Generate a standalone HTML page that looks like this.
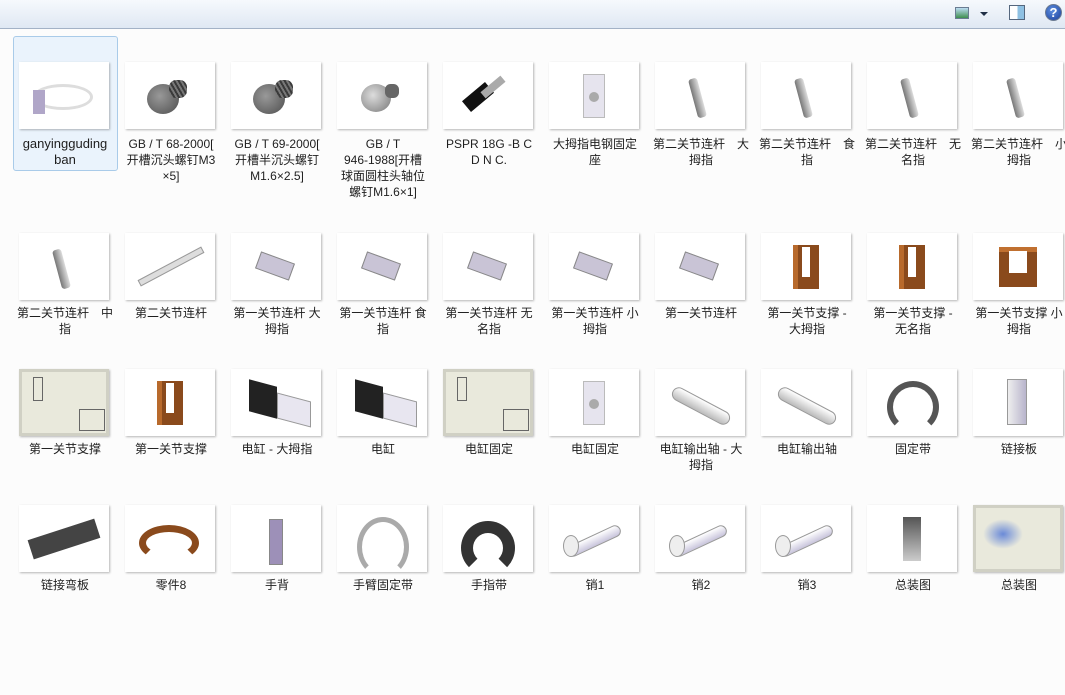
<!DOCTYPE html>
<html><head><meta charset="utf-8"><style>
*{margin:0;padding:0;box-sizing:border-box}
body{width:1065px;height:695px;overflow:hidden;background:#fcfcfc;font-family:"Liberation Sans","Noto Sans CJK SC",sans-serif;font-size:12px;color:#1e1e1e;position:relative}
.tb{position:absolute;left:0;top:0;width:1065px;height:29px;background:linear-gradient(#f6f9fd,#dfe8f3);border-bottom:1px solid #a3b2c6}
.it{position:absolute;width:104px;text-align:center}
.th{position:absolute;left:6px;width:90px;height:67px;background:#fff;box-shadow:1px 1px 2px rgba(0,0,0,.28);overflow:hidden}
.lb{position:absolute;left:-10px;width:124px;line-height:16px;text-align:center;white-space:nowrap}
.sel{position:absolute;left:13px;top:36px;width:105px;height:135px;border:1px solid #a9cbe9;border-radius:3px;background:#eaf3fc}
.s{position:absolute}
</style></head><body>
<div class="tb">
<div class="s" style="left:955px;top:7px;width:14px;height:12px;border:1px solid #6a7c92;background:linear-gradient(#bcdcf2,#3f8f4f)"></div>
<div class="s" style="left:980px;top:12px;width:0;height:0;border-left:4px solid transparent;border-right:4px solid transparent;border-top:4px solid #1f2f45"></div>
<div class="s" style="left:1009px;top:5px;width:16px;height:15px;border:1px solid #55677e;background:linear-gradient(90deg,#fff 55%,#8fc1e3 55%)"></div>
<div class="s" style="left:1045px;top:4px;width:17px;height:17px;border-radius:50%;background:radial-gradient(circle at 40% 35%,#5d8fe0,#1b3e9a);border:1px solid #6a7a92;color:#fff;font-weight:bold;font-size:13px;line-height:15px;text-align:center">?</div>
</div>
<div class="sel"></div>
<div id="g"></div>
<script>
var X=[13,119,225,331,437,543,649,755,861,967],Y=[62,233,369,505];
var items=[
["<span style='font-size:13px'>ganyingguding<br>ban</span>","bk"],["GB / T 68-2000[<br>开槽沉头螺钉M3<br>×5]","sc"],["GB / T 69-2000[<br>开槽半沉头螺钉<br>M1.6×2.5]","sc"],["GB / T<br>946-1988[开槽<br>球面圆柱头轴位<br>螺钉M1.6×1]","sg"],["PSPR 18G -B C<br>D N C.","ps"],["大拇指电钢固定<br>座","bs"],["第二关节连杆　大<br>拇指","ln"],["第二关节连杆　食<br>指","ln"],["第二关节连杆　无<br>名指","ln"],["第二关节连杆　小<br>拇指","ln"],
["第二关节连杆　中<br>指","ln"],["第二关节连杆","rod"],["第一关节连杆 大<br>拇指","lk"],["第一关节连杆 食<br>指","lk"],["第一关节连杆 无<br>名指","lk"],["第一关节连杆 小<br>拇指","lk"],["第一关节连杆","lk"],["第一关节支撑 -<br>大拇指","br"],["第一关节支撑 -<br>无名指","br"],["第一关节支撑 小<br>拇指","bb"],
["第一关节支撑","dw"],["第一关节支撑","br"],["电缸 - 大拇指","cy"],["电缸","cy"],["电缸固定","dw"],["电缸固定","bs"],["电缸输出轴 - 大<br>拇指","sh"],["电缸输出轴","sh"],["固定带","arc"],["链接板","pl"],
["链接弯板","bp"],["零件8","br2"],["手背","hb"],["手臂固定带","arc2"],["手指带","arc3"],["销1","pin"],["销2","pin"],["销3","pin"],["总装图","asm"],["总装图","dw2"]];
function art(t){
switch(t){
case"bk":return'<div class="s" style="left:14px;top:22px;width:60px;height:26px;border:3px solid #ddd;border-radius:50%;"></div><div class="s" style="left:14px;top:28px;width:12px;height:24px;background:#b0a6c8"></div>';
case"sc":return'<div class="s" style="left:22px;top:22px;width:32px;height:30px;border-radius:50%;background:radial-gradient(circle at 40% 40%,#999,#4d4d4d)"></div><div class="s" style="left:44px;top:18px;width:18px;height:18px;border-radius:40%;background:repeating-linear-gradient(60deg,#3a3a3a 0 2px,#777 2px 4px)"></div>';
case"sg":return'<div class="s" style="left:24px;top:22px;width:30px;height:28px;border-radius:50%;background:radial-gradient(circle at 40% 40%,#ddd,#777)"></div><div class="s" style="left:48px;top:22px;width:14px;height:14px;border-radius:40%;background:#666"></div>';
case"ps":return'<div class="s" style="left:28px;top:20px;width:14px;height:30px;background:#111;transform:rotate(50deg)"></div><div class="s" style="left:46px;top:12px;width:8px;height:26px;background:#aaa;transform:rotate(50deg)"></div>';
case"bs":return'<div class="s" style="left:34px;top:12px;width:22px;height:44px;background:#e6e4ee;border:1px solid #bbb"></div><div class="s" style="left:40px;top:30px;width:10px;height:10px;border-radius:50%;background:#aaa"></div>';
case"ln":return'<div class="s" style="left:38px;top:16px;width:9px;height:40px;background:linear-gradient(90deg,#777,#ddd);transform:rotate(-15deg);border-radius:3px"></div>';
case"rod":return'<div class="s" style="left:10px;top:30px;width:72px;height:7px;background:#ddd;border:1px solid #999;transform:rotate(-28deg)"></div>';
case"lk":return'<div class="s" style="left:26px;top:24px;width:36px;height:18px;background:#c9c4d6;border:1px solid #888;transform:rotate(20deg)"></div>';
case"br":return'<div class="s" style="left:32px;top:12px;width:26px;height:44px;background:#8a4a1c;border-left:5px solid #b86a2c"></div><div class="s" style="left:41px;top:14px;width:8px;height:30px;background:#fff"></div>';
case"bb":return'<div class="s" style="left:26px;top:14px;width:38px;height:40px;background:#8a4a1c;border-top:5px solid #c07030"></div><div class="s" style="left:36px;top:18px;width:18px;height:22px;background:#fff"></div>';
case"dw":return'<div class="s" style="left:0;top:0;width:90px;height:67px;background:#e9e9dc;border:3px solid #d0d0c4"></div><div class="s" style="left:60px;top:40px;width:26px;height:22px;border:1px solid #666"></div><div class="s" style="left:14px;top:8px;width:10px;height:24px;border:1px solid #666"></div>';
case"cy":return'<div class="s" style="left:18px;top:14px;width:28px;height:32px;background:#222;transform:skewY(15deg)"></div><div class="s" style="left:46px;top:28px;width:34px;height:26px;background:#e8e6f0;border:1px solid #999;transform:skewY(15deg)"></div>';
case"sh":return'<div class="s" style="left:14px;top:30px;width:64px;height:14px;border-radius:7px;background:linear-gradient(#fff,#bbb);border:1px solid #999;transform:rotate(28deg)"></div>';
case"arc":return'<div class="s" style="left:20px;top:12px;width:52px;height:52px;border:6px solid #555;border-bottom-color:transparent;border-radius:50%"></div>';
case"arc2":return'<div class="s" style="left:20px;top:12px;width:52px;height:60px;border:5px solid #aaa;border-bottom-color:transparent;border-radius:50%"></div>';
case"arc3":return'<div class="s" style="left:18px;top:16px;width:54px;height:54px;border:12px solid #333;border-bottom-color:transparent;border-radius:50%"></div>';
case"pl":return'<div class="s" style="left:34px;top:10px;width:20px;height:46px;background:linear-gradient(90deg,#eee,#b8b4cc);border:1px solid #999"></div>';
case"bp":return'<div class="s" style="left:10px;top:24px;width:70px;height:20px;background:#444;transform:rotate(-18deg)"></div>';
case"br2":return'<div class="s" style="left:14px;top:20px;width:60px;height:36px;border:7px solid #8a4a1c;border-bottom-color:transparent;border-radius:50%"></div>';
case"hb":return'<div class="s" style="left:38px;top:14px;width:14px;height:46px;background:#9d90b8;border:1px solid #888"></div>';
case"pin":return'<div class="s" style="left:16px;top:30px;width:58px;height:12px;border-radius:6px;background:linear-gradient(#fff,#c8c4dc);border:1px solid #999;transform:rotate(-25deg)"></div><div class="s" style="left:14px;top:30px;width:16px;height:22px;border-radius:50%;background:#eee;border:1px solid #999"></div>';
case"asm":return'<div class="s" style="left:36px;top:12px;width:18px;height:44px;background:linear-gradient(#555,#ccc)"></div>';
case"dw2":return'<div class="s" style="left:0;top:0;width:90px;height:67px;background:#e9e9dc;border:3px solid #d0d0c4"></div><div class="s" style="left:10px;top:14px;width:40px;height:30px;background:radial-gradient(#6a8ad8,transparent 70%)"></div>';
}return'';}
var h='';
items.forEach(function(it,i){var c=i%10,r=(i/10)|0;
h+='<div class="it" style="left:'+X[c]+'px;top:'+Y[r]+'px"><div class="th">'+art(it[1])+'</div><div class="lb" style="top:'+(r==0?74:72)+'px">'+it[0]+'</div></div>';});
document.getElementById('g').innerHTML=h;
</script>
</body></html>
